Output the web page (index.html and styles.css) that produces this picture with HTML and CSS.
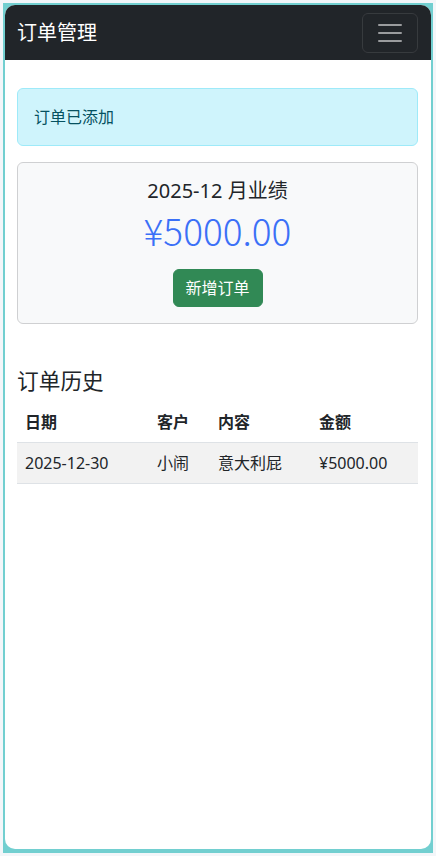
FILE: index.html
```html
<!DOCTYPE html>
<html lang="zh-CN">
<head>
<meta charset="utf-8">
<title>订单管理</title>
<link rel="stylesheet" href="styles.css">
</head>
<body>
<div class="frame">
  <div class="app">
    <nav class="navbar">
      <span class="brand">订单管理</span>
      <button class="toggler" type="button" aria-label="菜单">
        <svg width="30" height="30" viewBox="0 0 30 30"><path d="M4 7h22M4 15h22M4 23h22" stroke="rgba(255,255,255,0.55)" stroke-width="2" stroke-linecap="round"/></svg>
      </button>
    </nav>
    <main class="content">
      <div class="alert">订单已添加</div>
      <section class="card">
        <h5 class="card-title">2025-12 月业绩</h5>
        <div class="price">¥5000.00</div>
        <button class="btn-success" type="button">新增订单</button>
      </section>
      <h4 class="section-title">订单历史</h4>
      <table class="orders">
        <colgroup>
          <col class="c1"><col class="c2"><col class="c3"><col class="c4">
        </colgroup>
        <thead>
          <tr><th>日期</th><th>客户</th><th>内容</th><th>金额</th></tr>
        </thead>
        <tbody>
          <tr class="striped"><td>2025-12-30</td><td>小闹</td><td>意大利屁</td><td>¥5000.00</td></tr>
        </tbody>
      </table>
    </main>
  </div>
</div>
</body>
</html>
```
FILE: styles.css
```css
* { box-sizing: border-box; }
html, body { margin: 0; padding: 0; }
body {
  background: #f3f6f9;
  font-family: "Noto Sans", "Noto Sans CJK SC", sans-serif;
  font-size: 16px;
  line-height: 1.5;
  color: #212529;
  height: 856px;
  overflow: hidden;
}
.frame {
  margin: 3px;
  height: 850px;
  padding: 2px 2px 4px 2px;
  background: #72cfd0;
}
.app {
  height: 100%;
  background: #fff;
  border-radius: 10px;
  overflow: hidden;
}
.navbar {
  height: 55px;
  background: #212529;
  display: flex;
  align-items: center;
  justify-content: space-between;
  padding: 0 13px 0 12px;
}
.brand {
  color: #fff;
  font-size: 20px;
  line-height: 30px;
}
.toggler {
  width: 56px;
  height: 40px;
  padding: 4px 12px;
  background: transparent;
  border: 1px solid rgba(255,255,255,0.1);
  border-radius: 6px;
  display: flex;
  align-items: center;
  justify-content: center;
}
.toggler svg { display: block; }
.content {
  padding: 28px 13px 0 12px;
}
.alert {
  background: #cff4fc;
  border: 1px solid #9eeaf9;
  color: #055160;
  border-radius: 6px;
  padding: 16px;
  line-height: 24px;
  margin-bottom: 16px;
}
.card {
  background: #f8f9fa;
  border: 1px solid #cfd0d2;
  border-radius: 6px;
  padding: 16px;
  display: flex;
  flex-direction: column;
  align-items: center;
}
.card-title {
  margin: 0 0 4px;
  font-size: 20px;
  font-weight: 400;
  line-height: 24px;
}
.price {
  font-family: "Noto Sans CJK SC", sans-serif;
  font-weight: 300;
  font-size: 37px;
  line-height: 46px;
  color: #3b70f7;
  margin-bottom: 16px;
}
.btn-success {
  font-family: inherit;
  font-size: 16px;
  line-height: 24px;
  color: #fff;
  background: #318955;
  border: 1px solid #318955;
  border-radius: 6px;
  padding: 6px 12px;
  width: 90px;
}
.section-title {
  margin: 44px 0 8px;
  font-size: 21.7px;
  font-weight: 400;
  line-height: 26px;
}
.orders {
  width: 100%;
  border-collapse: collapse;
  table-layout: fixed;
}
.orders .c1 { width: 132px; }
.orders .c2 { width: 61px; }
.orders .c3 { width: 101px; }
.orders .c4 { width: 107px; }
.orders th, .orders td {
  text-align: left;
  padding: 8px;
  line-height: 24px;
  border-bottom: 1px solid #dee2e6;
  white-space: nowrap;
}
.orders th { font-weight: 700; }
.orders tr.striped td { background: #f2f2f2; }
```
